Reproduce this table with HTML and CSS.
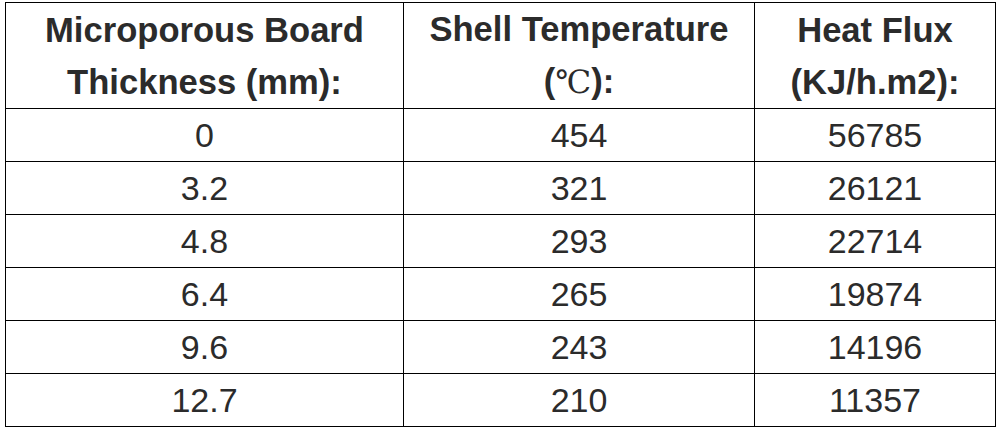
FILE: index.html
```html
<!DOCTYPE html>
<html lang="en">
  <head>
    <meta charset="UTF-8" />
    <meta name="viewport" content="width=device-width, initial-scale=1.0" />
    <title>Microporous Board</title>
    <link rel="stylesheet" href="styles.css">
  </head>

  <body>
    <table class="data">
      <colgroup>
        <col class="col-thick" />
        <col class="col-temp" />
        <col class="col-flux" />
      </colgroup>
      <thead>
        <tr>
          <th>Microporous Board<br />Thickness (mm):</th>
          <th>Shell Temperature<br />(<span class="unit">℃</span>):</th>
          <th>Heat Flux<br />(KJ/h.m2):</th>
        </tr>
      </thead>
      <tbody>
        <tr><td>0</td><td>454</td><td>56785</td></tr>
        <tr><td>3.2</td><td>321</td><td>26121</td></tr>
        <tr><td>4.8</td><td>293</td><td>22714</td></tr>
        <tr><td>6.4</td><td>265</td><td>19874</td></tr>
        <tr><td>9.6</td><td>243</td><td>14196</td></tr>
        <tr><td>12.7</td><td>210</td><td>11357</td></tr>
      </tbody>
    </table>
  </body>
</html>
```

FILE: styles.css
```css
body {
  margin: 0;
  padding: 2px 0 0 5px;
  background-color: #fff;
  font-family: "Liberation Sans", Arial, sans-serif;
  color: #2b2b2b;
}

.data {
  border-collapse: collapse;
  table-layout: fixed;
  width: 990px;
  border: 1px solid #000;
}

.col-thick {
  width: 398px;
}

.col-temp {
  width: 351px;
}

.col-flux {
  width: 241px;
}

th,
td {
  border: 1px solid #000;
  padding: 0;
  text-align: center;
  font-size: 34px;
  line-height: 52px;
}

th {
  font-weight: bold;
  font-size: 34.6px;
}

td {
  font-weight: normal;
}

.unit {
  font-family: "DejaVu Serif", serif;
  font-weight: normal;
  font-size: 32px;
}
```
